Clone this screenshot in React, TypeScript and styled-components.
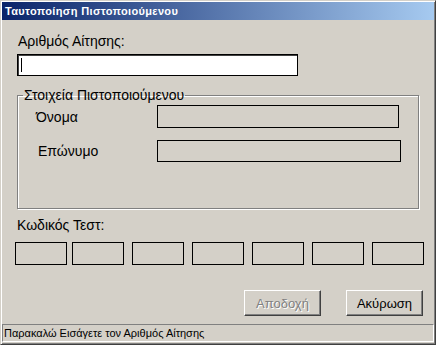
import React from "react";
import styled, { createGlobalStyle } from "styled-components";

const GlobalStyle = createGlobalStyle`
  html, body {
    margin: 0;
    padding: 0;
    background: #ffffff;
  }
  body {
    font-family: "Liberation Sans", Arial, sans-serif;
  }
`;

const Window = styled.div`
  box-sizing: border-box;
  width: 436px;
  height: 345px;
  padding: 1px;
  background: #d4d0c8;
  border: 1px solid;
  border-color: #d4d0c8 #404040 #404040 #d4d0c8;
  box-shadow: inset 1px 1px 0 #ffffff, inset -1px -1px 0 #808080;
  display: flex;
  flex-direction: column;
`;

const TitleBar = styled.div`
  height: 18px;
  display: flex;
  align-items: center;
  padding-left: 3px;
  background: linear-gradient(to right, #0a246a, #a6caf0);
  color: #ffffff;
  font-size: 11px;
  font-weight: bold;
  letter-spacing: 0.35px;
`;

const Content = styled.div`
  display: flex;
  flex-direction: column;
  padding: 0 0 0 15px;
  flex: 1;
`;

const Label = styled.div<{ $top?: number; $left?: number }>`
  font-size: 14px;
  line-height: 16px;
  color: #000000;
  margin-top: ${(p) => p.$top ?? 0}px;
  margin-left: ${(p) => p.$left ?? 0}px;
`;

const TextInput = styled.div`
  box-sizing: border-box;
  width: 281px;
  height: 22px;
  margin-top: 5px;
  background: #ffffff;
  border: 1px solid #000000;
  box-shadow: inset 1px 1px 0 #404040;
  display: flex;
  align-items: center;
  padding-left: 3px;
`;

const Caret = styled.span`
  display: block;
  width: 1px;
  height: 14px;
  background: #000000;
`;

const GroupBox = styled.fieldset`
  box-sizing: border-box;
  width: 402px;
  height: 122px;
  margin: 11px 0 0 0;
  padding: 2px 0 0 17px;
  border: 1px solid #808080;
  box-shadow: 1px 1px 0 #ffffff, inset 1px 1px 0 #ffffff;
  min-width: 0;
`;

const Legend = styled.legend`
  font-size: 14px;
  line-height: 16px;
  padding: 0 1px;
  margin-left: -12px;
  color: #000000;
`;

const FieldRow = styled.div<{ $top: number; $labelLeft: number }>`
  display: grid;
  grid-template-columns: ${(p) => 122 - p.$labelLeft}px auto;
  align-items: center;
  margin-top: ${(p) => p.$top}px;
  padding-left: ${(p) => p.$labelLeft}px;
`;

const Field = styled.div<{ $width: number; $height: number }>`
  box-sizing: border-box;
  width: ${(p) => p.$width}px;
  height: ${(p) => p.$height}px;
  border: 1px solid #000000;
`;

const CodeRow = styled.div`
  display: flex;
  margin: 9px 0 0 -2px;
  gap: 8px;
`;

const CodeBox = styled.div<{ $first?: boolean }>`
  box-sizing: border-box;
  width: 52px;
  height: 23px;
  border: 1px solid #000000;
  margin-right: ${(p) => (p.$first ? -3 : 0)}px;
`;

const ButtonRow = styled.div`
  display: flex;
  justify-content: flex-end;
  gap: 25px;
  margin: 25px 11px 0 0;
`;

const Button = styled.div<{ $disabled?: boolean }>`
  box-sizing: border-box;
  width: 77px;
  height: 26px;
  display: flex;
  align-items: center;
  justify-content: center;
  font-size: 13px;
  border: 1px solid;
  border-color: #ffffff #404040 #404040 #ffffff;
  box-shadow: inset -1px -1px 0 #808080;
  color: ${(p) => (p.$disabled ? "#808080" : "#000000")};
  text-shadow: ${(p) => (p.$disabled ? "1px 1px 0 #ffffff" : "none")};
`;

const StatusBar = styled.div`
  box-sizing: border-box;
  height: 18px;
  margin-top: auto;
  margin-bottom: 1px;
  border: 1px solid;
  border-color: #808080 #ffffff #ffffff #808080;
  font-size: 11px;
  line-height: 16px;
  padding-left: 1px;
  color: #000000;
`;

export default function App() {
  return (
    <>
      <GlobalStyle />
      <Window>
        <TitleBar>Ταυτοποίηση Πιστοποιούμενου</TitleBar>
        <Content>
          <Label $top={13} $left={1}>
            Αριθμός Αίτησης:
          </Label>
          <TextInput>
            <Caret />
          </TextInput>
          <GroupBox>
            <Legend>Στοιχεία Πιστοποιούμενου</Legend>
            <FieldRow $top={0} $labelLeft={1}>
              <Label>Όνομα</Label>
              <Field $width={242} $height={23} />
            </FieldRow>
            <FieldRow $top={12} $labelLeft={3}>
              <Label>Επώνυμο</Label>
              <Field $width={244} $height={22} />
            </FieldRow>
          </GroupBox>
          <Label $top={8}>Κωδικός Τεστ:</Label>
          <CodeRow>
            {Array.from({ length: 7 }).map((_, i) => (
              <CodeBox key={i} $first={i === 0} />
            ))}
          </CodeRow>
          <ButtonRow>
            <Button $disabled>Αποδοχή</Button>
            <Button>Ακύρωση</Button>
          </ButtonRow>
        </Content>
        <StatusBar>Παρακαλώ Εισάγετε τον Αριθμός Αίτησης</StatusBar>
      </Window>
    </>
  );
}
